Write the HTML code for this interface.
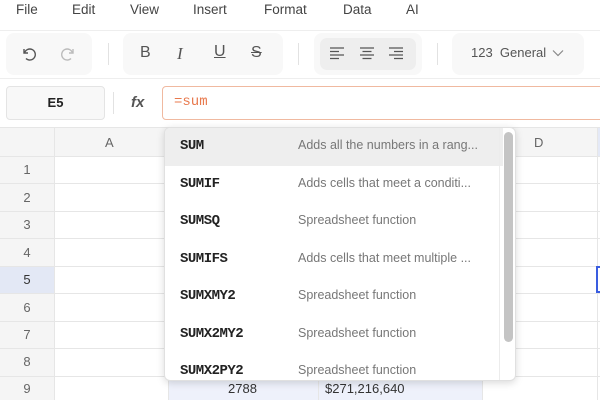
<!DOCTYPE html>
<html><head><style>
*{box-sizing:border-box;margin:0;padding:0}
body{width:600px;height:400px;overflow:hidden;background:#fff;font-family:"Liberation Sans",sans-serif;color:#333;position:relative}
.abs{position:absolute}
.menu span{position:absolute;top:2px;font-size:13.5px;color:#444}
.grp{position:absolute;background:#f8f8f8;border-radius:8px}
.sep{position:absolute;width:1px;background:#e2e2e2}
.ic{position:absolute;font-size:16px;color:#555;text-align:center}
.hl{position:absolute;height:1px;background:#e6e6e6;left:0;width:600px}
.vl{position:absolute;width:1px;background:#e6e6e6}
.rn{position:absolute;left:0;width:54px;text-align:center;font-size:13px;color:#666}
.item{position:absolute;left:0;width:338px;height:37.5px}
.item b{position:absolute;left:15px;top:10px;font-family:"Liberation Mono",monospace;font-size:14px;font-weight:bold;color:#222;letter-spacing:-0.5px}
.item i{position:absolute;left:133px;top:10px;font-style:normal;font-size:12.5px;color:#777}
</style></head><body>
<div class="menu">
<span style="left:16px">File</span><span style="left:72px">Edit</span><span style="left:130px">View</span><span style="left:193px">Insert</span><span style="left:264px">Format</span><span style="left:343px">Data</span><span style="left:406px">AI</span>
</div>
<div class="hl" style="top:30px;background:#eee"></div>
<div class="grp" style="left:6px;top:33px;width:86px;height:42px"></div>
<div class="grp" style="left:123px;top:33px;width:160px;height:42px"></div>
<div class="grp" style="left:314px;top:33px;width:108px;height:42px"></div>
<div class="abs" style="left:320px;top:38px;width:96px;height:32px;background:#eeeeee;border-radius:7px"></div>
<div class="grp" style="left:452px;top:33px;width:132px;height:42px"></div>
<div class="sep" style="left:108px;top:43px;height:22px"></div>
<div class="sep" style="left:298px;top:43px;height:22px"></div>
<div class="sep" style="left:437px;top:43px;height:22px"></div>
<svg class="abs" style="left:20px;top:45px" width="18" height="18" viewBox="0 0 18 18" fill="none" stroke="#555" stroke-width="1.4"><path d="M4 4v4h4"/><path d="M4.5 8A5.5 5.5 0 1 1 6 13.5"/></svg>
<svg class="abs" style="left:59px;top:45px" width="18" height="18" viewBox="0 0 18 18" fill="none" stroke="#bbb" stroke-width="1.4"><path d="M14 4v4h-4"/><path d="M13.5 8A5.5 5.5 0 1 0 12 13.5"/></svg>
<div class="ic" style="left:140px;top:44px;font-size:16px">B</div>
<div class="ic" style="left:177px;top:44px;font-style:italic;font-family:'Liberation Serif',serif;font-size:17px">I</div>
<div class="ic" style="left:214px;top:43px;text-decoration:underline">U</div>
<div class="ic" style="left:251px;top:44px;text-decoration:line-through">S</div>
<svg class="abs" style="left:330px;top:46px" width="80" height="14" viewBox="0 0 80 14" stroke="#555" stroke-width="1.3"><path d="M0 2h14M0 5.5h9M0 9h14M0 12.5h9"/><path d="M30 2h14M32.5 5.5h9M30 9h14M32.5 12.5h9"/><path d="M59 2h14M64 5.5h9M59 9h14M64 12.5h9"/></svg>
<div class="abs" style="left:471px;top:45px;font-size:13px;color:#555">123&nbsp; General</div>
<svg class="abs" style="left:552px;top:49px" width="12" height="8" viewBox="0 0 12 8" fill="none" stroke="#888" stroke-width="1.2"><path d="M1 1.5l5 5 5-5"/></svg>
<div class="hl" style="top:78px;background:#eee"></div>
<div class="abs" style="left:6px;top:86px;width:99px;height:34px;background:#f8f8f8;border:1px solid #e4e4e4;border-radius:4px;text-align:center;line-height:32px;font-size:13px;font-weight:bold;color:#222">E5</div>
<div class="sep" style="left:113px;top:92px;height:22px"></div>
<div class="abs" style="left:131px;top:94px;font-size:15px;font-style:italic;font-weight:bold;color:#555">fx</div>
<div class="abs" style="left:162px;top:86px;width:450px;height:34px;border:1px solid #f0b9a0;border-radius:4px;font-family:'Liberation Mono',monospace;font-size:14px;color:#e8794d;padding:7px 0 0 11px">=sum</div>
<!-- grid -->
<div class="abs" style="left:0;top:128px;width:600px;height:28px;background:#f5f5f5"></div>
<div class="abs" style="left:0;top:128px;width:54px;height:272px;background:#f5f5f5"></div>
<div class="abs" style="left:597px;top:128px;width:3px;height:28px;background:#e4e9f7"></div>
<div class="abs" style="left:0;top:266px;width:54px;height:27px;background:#e3e8f5"></div>
<div class="abs" style="left:168px;top:376px;width:314px;height:24px;background:#eef1fb"></div>
<div class="hl" style="top:127px"></div>
<div class="hl" style="top:156px"></div>
<div class="hl" style="top:183px"></div><div class="hl" style="top:211px"></div><div class="hl" style="top:238px"></div><div class="hl" style="top:266px"></div><div class="hl" style="top:293px"></div><div class="hl" style="top:321px"></div><div class="hl" style="top:348px"></div><div class="hl" style="top:376px"></div>
<div class="vl" style="left:54px;top:128px;height:272px"></div>
<div class="vl" style="left:168px;top:128px;height:272px"></div>
<div class="vl" style="left:318px;top:128px;height:272px"></div>
<div class="vl" style="left:482px;top:128px;height:272px"></div>
<div class="vl" style="left:597px;top:128px;height:272px"></div>
<div class="abs" style="left:596px;top:266px;width:6px;height:27px;border:2px solid #3a5de0"></div>
<div class="abs" style="left:105px;top:135px;font-size:13px;color:#666">A</div>
<div class="abs" style="left:534px;top:135px;font-size:13px;color:#666">D</div>
<div class="rn" style="top:162px">1</div><div class="rn" style="top:190px">2</div><div class="rn" style="top:217px">3</div><div class="rn" style="top:245px">4</div><div class="rn" style="top:272px;color:#333">5</div><div class="rn" style="top:300px">6</div><div class="rn" style="top:327px">7</div><div class="rn" style="top:354px">8</div><div class="rn" style="top:381px">9</div>
<div class="abs" style="left:228px;top:381px;font-size:13px;color:#333">2788</div>
<div class="abs" style="left:325px;top:381px;font-size:13px;color:#333">$271,216,640</div>
<!-- dropdown -->
<div class="abs" style="left:164px;top:127px;width:352px;height:254px;background:#fff;border:1px solid #e0e0e0;border-radius:6px;box-shadow:0 2px 8px rgba(0,0,0,0.15);overflow:hidden">
<div class="item" style="top:0;background:#eeeeee"><b>SUM</b><i>Adds all the numbers in a rang...</i></div>
<div class="item" style="top:37.5px"><b>SUMIF</b><i>Adds cells that meet a conditi...</i></div>
<div class="item" style="top:75px"><b>SUMSQ</b><i>Spreadsheet function</i></div>
<div class="item" style="top:112.5px"><b>SUMIFS</b><i>Adds cells that meet multiple ...</i></div>
<div class="item" style="top:150px"><b>SUMXMY2</b><i>Spreadsheet function</i></div>
<div class="item" style="top:187.5px"><b>SUMX2MY2</b><i>Spreadsheet function</i></div>
<div class="item" style="top:225px"><b>SUMX2PY2</b><i>Spreadsheet function</i></div>
<div class="abs" style="left:334px;top:0;width:1px;height:254px;background:#ececec"></div>
<div class="abs" style="left:339px;top:4px;width:9px;height:210px;background:#c4c4c4;border-radius:5px"></div>
</div>
</body></html>
